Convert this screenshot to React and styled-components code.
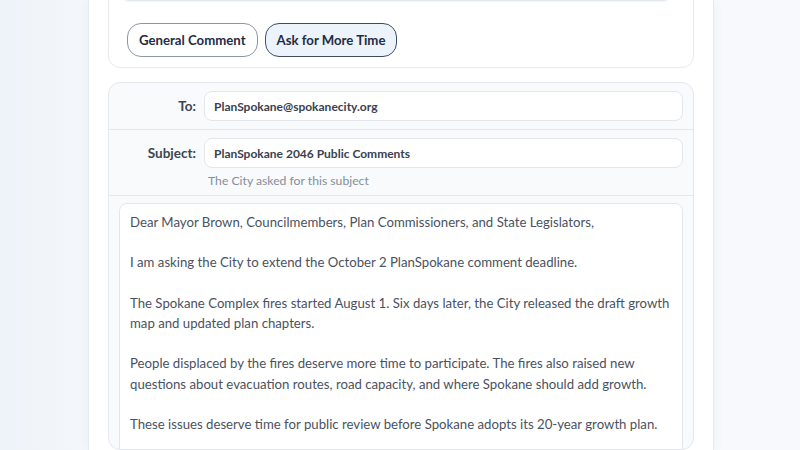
import styled, { createGlobalStyle } from 'styled-components'

const GlobalStyle = createGlobalStyle`
    html, body {
        margin: 0;
        padding: 0;
        height: 100%;
        overflow: hidden;
    }
    body {
        background: linear-gradient(90deg, #eef3f9 0%, #f3f6fa 10%, #f7f9fc 100%);
        font-family: Lato, "Noto Sans", sans-serif;
    }
`

const letter = `Dear Mayor Brown, Councilmembers, Plan Commissioners, and State Legislators,

I am asking the City to extend the October 2 PlanSpokane comment deadline.

The Spokane Complex fires started August 1. Six days later, the City released the draft growth map and updated plan chapters.

People displaced by the fires deserve more time to participate. The fires also raised new questions about evacuation routes, road capacity, and where Spokane should add growth.

These issues deserve time for public review before Spokane adopts its 20-year growth plan.

Please extend the comment period so residents can respond.`

const App = () => {
    return (
        <>
            <GlobalStyle />
            <Page>
                <Column>
                    <TemplateCard>
                        <PreviewBar />
                        <ButtonRow>
                            <TemplateButton>General Comment</TemplateButton>
                            <TemplateButton $active>Ask for More Time</TemplateButton>
                        </ButtonRow>
                    </TemplateCard>
                    <EmailCard>
                        <FieldRow>
                            <Label>To:</Label>
                            <Input readOnly value="PlanSpokane@spokanecity.org" />
                        </FieldRow>
                        <FieldRow $hasHint>
                            <Label>Subject:</Label>
                            <div>
                                <Input readOnly value="PlanSpokane 2046 Public Comments" />
                                <Hint>The City asked for this subject</Hint>
                            </div>
                        </FieldRow>
                        <BodyArea>
                            <Message defaultValue={letter} spellCheck={false} />
                        </BodyArea>
                    </EmailCard>
                </Column>
            </Page>
        </>
    )
}

export default App

const Page = styled.div`
    display: flex;
    height: 100vh;
    padding-left: 88px;
`

const Column = styled.main`
    width: 626px;
    background: #ffffff;
    border-left: 1px solid #e6ebf2;
    border-right: 1px solid #e6ebf2;
    box-shadow: 0 0 12px rgba(30, 50, 90, 0.04);
    padding: 0 19px;
    box-sizing: border-box;
    display: flex;
    flex-direction: column;
    gap: 14px;
`

const TemplateCard = styled.section`
    margin-top: -21px;
    border: 1px solid #e6e9ee;
    border-radius: 12px;
    padding: 0 18px 10px;
    display: flex;
    flex-direction: column;
    gap: 22px;
`

const PreviewBar = styled.div`
    height: 20px;
    margin: 0 4px 0 -6px;
    border-bottom: 1px solid #e3e8f0;
    border-radius: 0 0 8px 8px;
    box-shadow: 0 1px 2px rgba(40, 60, 100, 0.06);
`

const ButtonRow = styled.div`
    display: flex;
    gap: 7px;
`

const TemplateButton = styled.button`
    height: 34px;
    padding: 0 11px;
    border-radius: 14px;
    font-family: inherit;
    font-size: 13.2px;
    font-weight: 700;
    color: #1f2c46;
    cursor: pointer;
    background: ${({ $active }) => ($active ? '#edf3fb' : '#ffffff')};
    border: ${({ $active }) =>
        $active ? '1.5px solid #3e4c63' : '1px solid #8d96a5'};
`

const EmailCard = styled.section`
    border: 1px solid #e4e8ee;
    border-radius: 12px;
    background: #f8fafc;
    overflow: hidden;
`

const FieldRow = styled.div`
    display: grid;
    grid-template-columns: 77px 1fr;
    column-gap: 8px;
    align-items: start;
    padding: 8px 10px ${({ $hasHint }) => ($hasHint ? '6px' : '8px')};
    border-bottom: 1px solid #e4e8ee;
`

const Label = styled.label`
    text-align: right;
    font-size: 13.5px;
    font-weight: 700;
    color: #3d4552;
    line-height: 30px;
`

const Input = styled.input`
    display: block;
    width: 100%;
    box-sizing: border-box;
    height: 30px;
    padding: 0 9px;
    border: 1px solid #e2e6ed;
    border-radius: 8px;
    background: #ffffff;
    font-family: inherit;
    font-size: 12px;
    font-weight: 700;
    color: #394150;
    outline: none;
`

const Hint = styled.div`
    margin: 5px 0 0 4px;
    font-size: 12.2px;
    line-height: 16px;
    color: #858e9b;
`

const BodyArea = styled.div`
    padding: 7px 10px 0;
`

const Message = styled.textarea`
    display: block;
    width: 100%;
    height: 300px;
    box-sizing: border-box;
    padding: 8px 10px;
    border: 1px solid #e2e6ed;
    border-radius: 8px;
    background: #ffffff;
    font-family: inherit;
    font-size: 13.2px;
    line-height: 20.2px;
    color: #4a5261;
    resize: none;
    overflow: hidden;
    outline: none;
`
